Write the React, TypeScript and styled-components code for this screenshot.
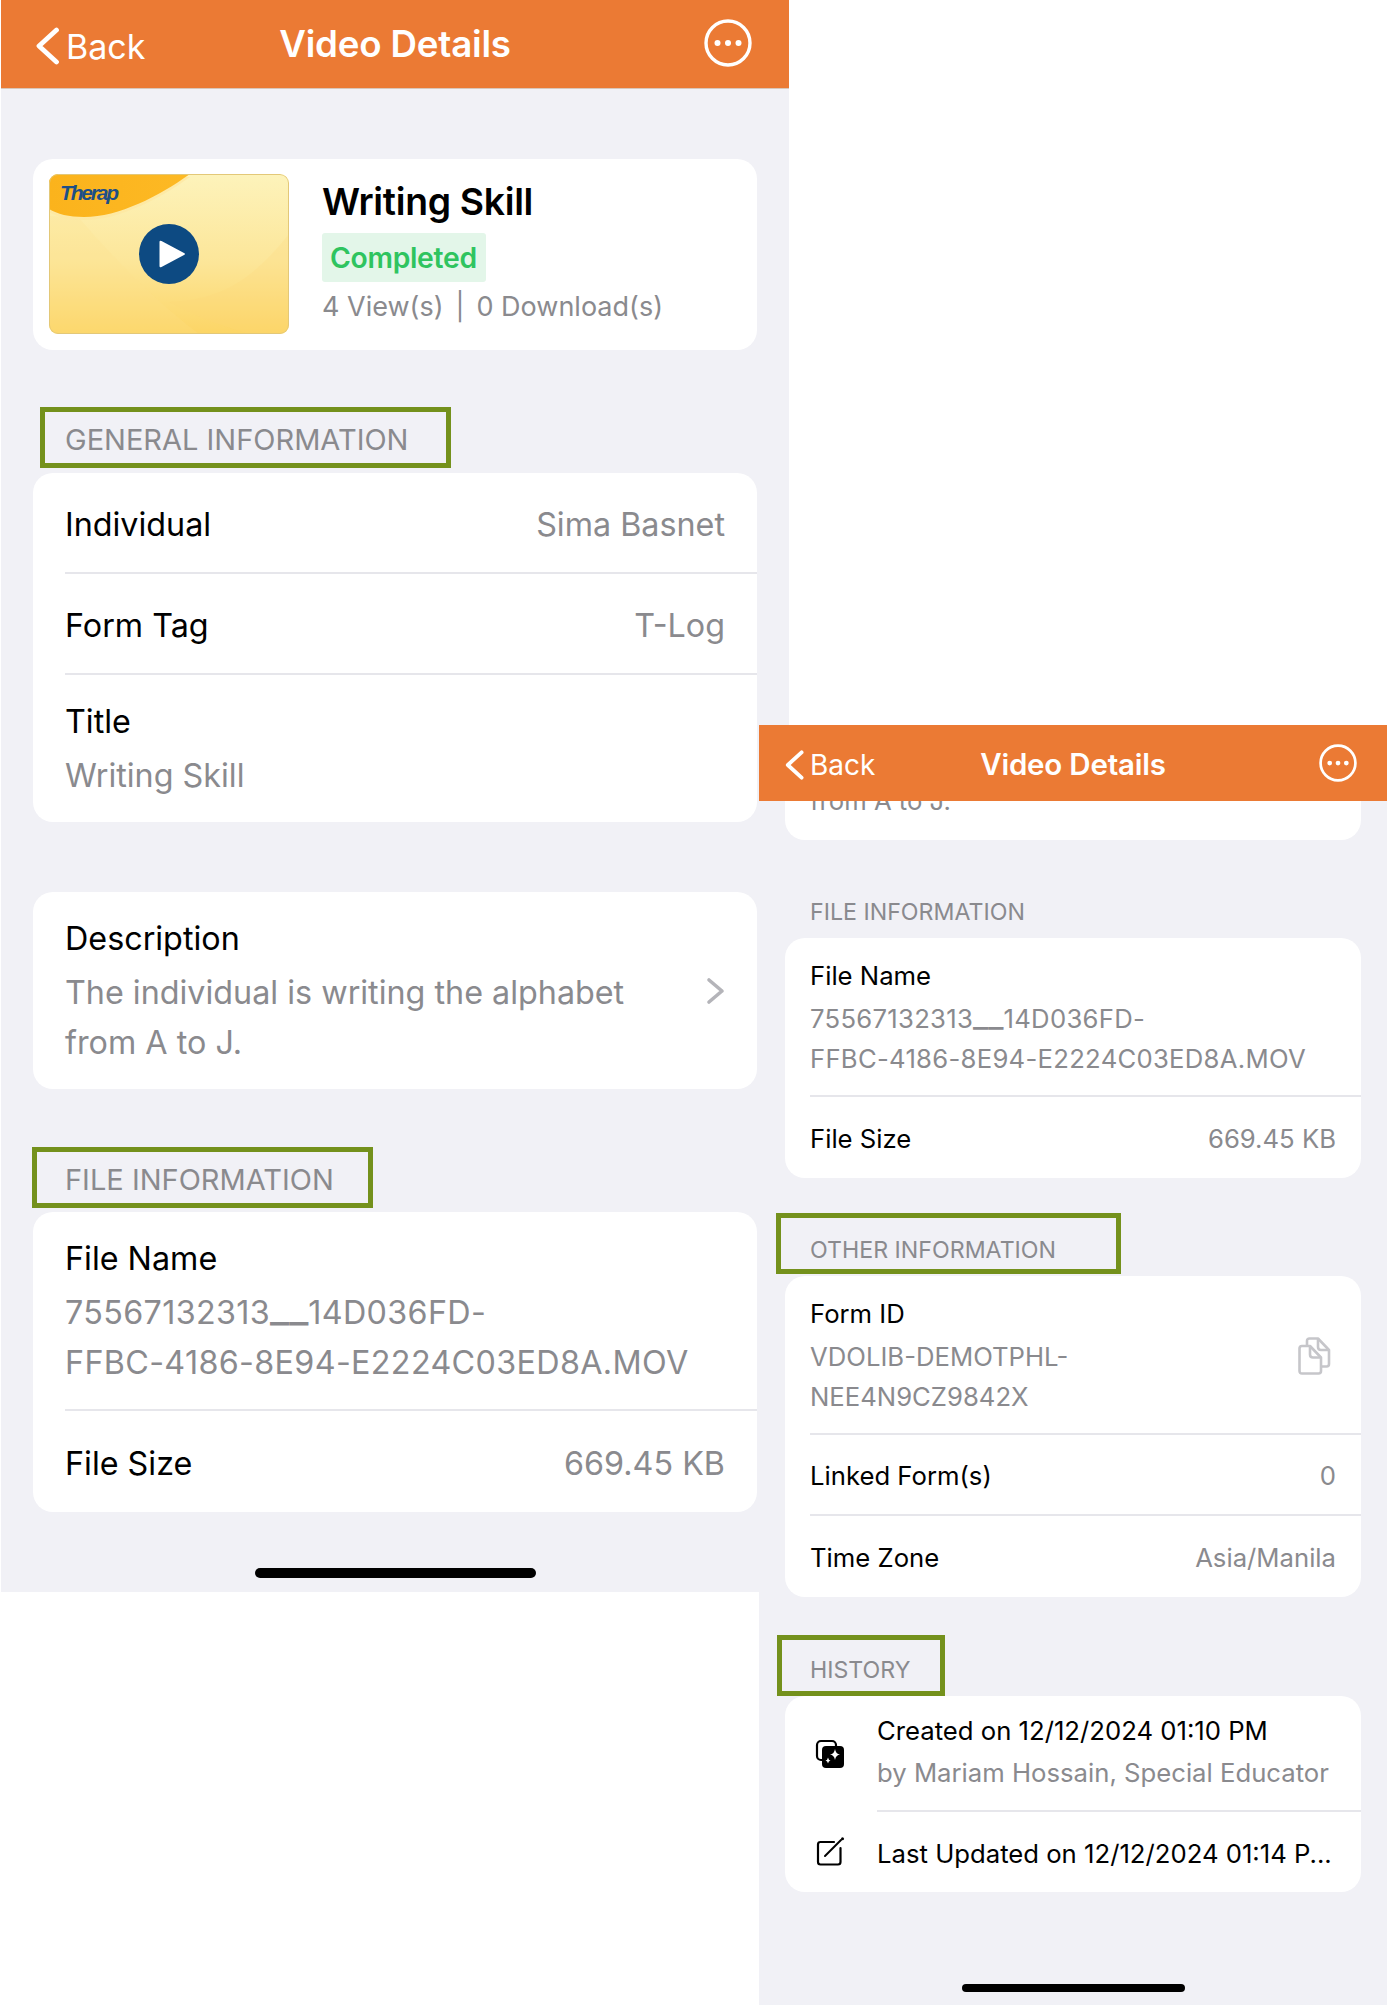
import React from 'react';
import styled, { createGlobalStyle } from 'styled-components';

const GlobalStyle = createGlobalStyle`
    html, body {
        margin: 0;
        padding: 0;
        background: #fff;
    }
    * {
        box-sizing: border-box;
    }
`

const Page = styled.div`
    width: 1387px;
    height: 2005px;
    padding-left: 1px;
    display: flex;
    align-items: flex-start;
    overflow: hidden;
    font-family: 'Inter', 'Liberation Sans', sans-serif;
    color: #000;
`

// the two screenshots differ in scale, so sizes hang off css variables
const Phone = styled.div<{ $small?: boolean }>`
    display: flex;
    flex-direction: column;
    flex: none;
    background: #f1f1f6;
    --text: ${p => (p.$small ? '25.7px' : '32.3px')};
    --line: ${p => (p.$small ? '40px' : '50px')};
    --label: ${p => (p.$small ? '23.2px' : '29px')};
    --row: ${p => (p.$small ? '81px' : '101px')};
    --row-top: ${p => (p.$small ? '2px' : '4px')};
    --pad-top: ${p => (p.$small ? '18px' : '22px')};
    --pad-bottom: ${p => (p.$small ? '16px' : '21px')};
    --inset: ${p => (p.$small ? '25px' : '32px')};
    --line-gap: ${p => (p.$small ? '3px' : '4px')};
    width: ${p => (p.$small ? '628px' : '788px')};
    height: ${p => (p.$small ? '1280px' : '1592px')};
    margin: ${p => (p.$small ? '725px 0 0 -30px' : '0')};
`

const Header = styled.header<{ $small?: boolean }>`
    display: grid;
    grid-template-columns: 1fr auto 1fr;
    align-items: center;
    flex: none;
    background: #eb7a34;
    color: #fff;
    height: ${p => (p.$small ? '76px' : '89px')};
    padding: ${p => (p.$small ? '0 30px' : '0 37px 2px')};
    border-bottom: ${p => (p.$small ? '0' : '1px solid #d9c6b9')};
    position: relative;
    z-index: 1;
`

const BackButton = styled.div<{ $small?: boolean }>`
    display: flex;
    align-items: center;
    gap: ${p => (p.$small ? '6px' : '7px')};
    margin-left: ${p => (p.$small ? '-4px' : '-2px')};
    font-size: ${p => (p.$small ? '28px' : '34px')};
    padding-top: ${p => (p.$small ? '4px' : '6px')};
`

const HeaderTitle = styled.div<{ $small?: boolean }>`
    font-size: ${p => (p.$small ? '29.5px' : '36.7px')};
    padding-top: ${p => (p.$small ? '1px' : '0')};
    font-weight: 600;
    letter-spacing: -0.2px;
`

const MoreWrap = styled.div`
    display: flex;
    justify-content: flex-end;
`

const Content = styled.div<{ $small?: boolean }>`
    display: flex;
    flex-direction: column;
    padding: ${p => (p.$small ? '0 26px' : '70px 32px 0')};
`

const Card = styled.section<{ $gap?: number }>`
    background: #fff;
    border-radius: 20px;
    overflow: hidden;
    margin-top: ${p => p.$gap ?? 0}px;
`

const ClippedCard = styled(Card)`
    height: 39px;
    border-radius: 0 0 20px 20px;
    padding-left: 25px;
`

const ClippedText = styled.div`
    margin-top: -20px;
    font-size: var(--text);
    line-height: var(--line);
    color: #8a8a8e;
`

const VideoCard = styled(Card)`
    display: flex;
    gap: 33px;
    padding: 15px 16px 16px;
`

const Thumb = styled.svg`
    display: block;
    flex: none;
    width: 240px;
    height: 160px;
    border-radius: 9px;
`

const VideoInfo = styled.div`
    display: flex;
    flex-direction: column;
    align-items: flex-start;
    padding-top: 5px;
`

const VideoTitle = styled.h1`
    margin: 0 0 8px;
    font-size: 37.3px;
    line-height: 46px;
    font-weight: 600;
    letter-spacing: -0.3px;
`

const Badge = styled.span`
    height: 49px;
    padding: 0 9.5px 0 8px;
    display: flex;
    align-items: center;
    background: #e3f6e9;
    border-radius: 3px;
    color: #2fc45f;
    font-size: 28.3px;
    font-weight: 600;
    letter-spacing: -0.3px;
`

const Stats = styled.div`
    margin-top: 3px;
    font-size: 27px;
    line-height: 44px;
    color: #8a8a8e;
    display: flex;
    gap: 12px;
`

// section title; $boxed draws the green call out that is on the screenshot
const SectionLabel = styled.div<{ $boxed?: boolean; $x: number; $w: number; $before: number; $after: number; $pad: number; $top?: number }>`
    flex: none;
    height: 61px;
    width: ${p => p.$w}px;
    margin: ${p => p.$before}px 0 ${p => p.$after}px ${p => p.$x}px;
    padding: ${p => (p.$top ?? 8) - 1}px 0 0 ${p => p.$pad - 1}px;
    border: 5px solid ${p => (p.$boxed ? '#74911c' : 'transparent')};
    font-size: var(--label);
    line-height: 42px;
    color: #8a8a8e;
    white-space: nowrap;
`

const Row = styled.div`
    display: flex;
    align-items: center;
    justify-content: space-between;
    min-height: var(--row);
    margin-left: var(--inset);
    padding: var(--row-top) var(--inset) 0 0;
    font-size: var(--text);
    line-height: var(--line);

    &:not(:last-child) {
        border-bottom: 2px solid #e6e6eb;
    }
`

const StackRow = styled(Row)`
    padding-top: var(--pad-top);
    padding-bottom: var(--pad-bottom);
`

const Stack = styled.div`
    display: flex;
    flex-direction: column;
    gap: var(--line-gap);
`

const Value = styled.span`
    color: #8a8a8e;
`

const WrapValue = styled(Value)`
    display: block;
    white-space: pre-line;
`

const FileValue = styled(WrapValue)`
    letter-spacing: 0.0103em;
`

// the reference draws these wider than Inter does, and joined up
const Underscores = styled.span`
    font-size: 1.3em;
    line-height: 0;
    letter-spacing: 0;
    vertical-align: 0.04em;
`

const CopyWrap = styled.div`
    display: flex;
    margin-right: 5px;
`

const HistoryRow = styled.div`
    display: grid;
    grid-template-columns: 92px 1fr;
    align-items: center;
    font-size: var(--text);
`

const HistoryIcon = styled.div`
    display: flex;
    justify-content: center;
    padding-right: 2px;
`

const HistoryBody = styled.div<{ $first?: boolean }>`
    display: flex;
    flex-direction: column;
    justify-content: center;
    gap: 2px;
    height: ${p => (p.$first ? '116px' : '80px')};
    line-height: 40px;
    white-space: nowrap;
    border-bottom: ${p => (p.$first ? '2px solid #e6e6eb' : '0')};
    padding: ${p => (p.$first ? '1px 0 3px' : '4px 0 0')};
`

const HomeBar = styled.div<{ $small?: boolean }>`
    flex: none;
    margin: auto auto ${p => (p.$small ? '13px' : '14px')};
    width: ${p => (p.$small ? '223px' : '281px')};
    height: ${p => (p.$small ? '8px' : '10px')};
    border-radius: 5px;
    background: #000;
`

function Chevron({ small }: { small?: boolean }) {
    const w = small ? 19 : 23
    const h = small ? 30 : 38
    return (
        <svg width={w} height={h} viewBox="0 0 23 38" fill="none">
            <path d="M20.500 3 L3 19 L20.500 35" stroke="#fff" strokeWidth="4.800" strokeLinecap="round" strokeLinejoin="round" />
        </svg>
    )
}

function MoreIcon({ small }: { small?: boolean }) {
    const size = small ? 38 : 48
    return (
        <svg width={size} height={size} viewBox="0 0 48 48" fill="none">
            <circle cx="24" cy="24" r="22" stroke="#fff" strokeWidth="3.400" />
            <circle cx="13.500" cy="24" r="3" fill="#fff" />
            <circle cx="24" cy="24" r="3" fill="#fff" />
            <circle cx="34.500" cy="24" r="3" fill="#fff" />
        </svg>
    )
}

function DisclosureIcon() {
    return (
        <svg width="19" height="28" viewBox="0 0 19 28" fill="none">
            <path d="M3 3 L16 14 L3 25" stroke="#b4b4b9" strokeWidth="3.600" strokeLinecap="round" strokeLinejoin="round" />
        </svg>
    )
}

function CopyIcon() {
    return (
        <svg width="33" height="38" viewBox="0 0 33 38" fill="none" stroke="#c6c6ca" strokeWidth="2.600" strokeLinejoin="round">
            <path d="M9 9 V4 Q9 1.500 11.500 1.500 H20 L31 13 V27 Q31 29.500 28.500 29.500 H23" />
            <path d="M20 1.500 V10 Q20 13 23 13 H31" />
            <path d="M4 9 H12 L23 20.500 V34 Q23 36.500 20.500 36.500 H4 Q1.500 36.500 1.500 34 V11.500 Q1.500 9 4 9 Z" fill="#fff" />
            <path d="M12 9 V17.500 Q12 20.500 15 20.500 H23" />
        </svg>
    )
}

function CreatedIcon() {
    return (
        <svg width="30" height="30" viewBox="0 0 30 30" fill="none">
            <rect x="2" y="2" width="19" height="19" rx="4" stroke="#000" strokeWidth="2.200" />
            <rect x="7" y="7" width="22" height="22" rx="4" fill="#000" />
            <path d="M20 10 Q20.800 15 25 15.500 Q20.800 16 20 21 Q19.200 16 15 15.500 Q19.200 15 20 10 Z" fill="#fff" />
            <path d="M13 18.500 Q13.400 21 15.500 21.500 Q13.400 22 13 24.500 Q12.600 22 10.500 21.500 Q12.600 21 13 18.500 Z" fill="#fff" />
        </svg>
    )
}

function EditIcon() {
    return (
        <svg width="30" height="30" viewBox="0 0 30 30" fill="none">
            <path d="M19 5 H5.500 Q3 5 3 7.500 V25 Q3 27.500 5.500 27.500 H23 Q25.500 27.500 25.500 25 V11" stroke="#000" strokeWidth="2.200" strokeLinecap="round" />
            <path d="M10 19 L26 3" stroke="#000" strokeWidth="2" strokeLinecap="round" />
            <circle cx="27.500" cy="1.800" r="1.500" fill="#000" />
        </svg>
    )
}

function Thumbnail() {
    return (
        <Thumb viewBox="0 0 240 160">
            <defs>
                <linearGradient id="paper" x1="0" y1="0" x2="0" y2="1">
                    <stop offset="0" stopColor="#fdf3bb" />
                    <stop offset="0.55" stopColor="#fce699" />
                    <stop offset="1" stopColor="#fcd565" />
                </linearGradient>
                <linearGradient id="swoosh" x1="0" y1="0" x2="1" y2="0">
                    <stop offset="0" stopColor="#fbb31c" />
                    <stop offset="1" stopColor="#fdb924" />
                </linearGradient>
            </defs>
            <rect width="240" height="160" fill="url(#paper)" />
            <path d="M30 44 C70 90 110 130 150 160 H0 V42 Z" fill="#fde08a" opacity="0.2" />
            <path d="M240 60 C200 110 170 125 120 128 C150 145 175 152 200 160 H240 Z" fill="#fdd977" opacity="0.2" />
            <path d="M0 0 H141 C110 22 70 43 35 43 C20 43 8 40 0 35 Z" fill="#fde7a0" opacity="0.7" transform="translate(0 3)" />
            <path d="M0 0 H141 C110 22 70 43 35 43 C20 43 8 40 0 35 Z" fill="url(#swoosh)" />
            <text x="11" y="26" fontFamily="'Liberation Sans', sans-serif" fontStyle="italic" fontWeight="700" fontSize="21" letterSpacing="-2.200" fill="#1d4f86">Therap</text>
            <circle cx="120" cy="80" r="30" fill="#0d4a82" />
            <path d="M112.500 67 L135 79 Q137 80 135 81 L112.500 93 Q110.500 94 110.500 92 V68 Q110.500 66 112.500 67 Z" fill="#fff" />
            <rect x="0.500" y="0.500" width="239" height="159" rx="8.500" fill="none" stroke="#e3c878" />
        </Thumb>
    )
}

function FileName() {
    return (
        <FileValue>
            75567132313<Underscores>__</Underscores>14D036FD-{'\n'}FFBC-4186-8E94-E2224C03ED8A.MOV
        </FileValue>
    )
}

export default function App() {
    return (
        <Page>
            <GlobalStyle />
            <Phone>
                <Header>
                    <BackButton><Chevron /> Back</BackButton>
                    <HeaderTitle>Video Details</HeaderTitle>
                    <MoreWrap><MoreIcon /></MoreWrap>
                </Header>
                <Content>
                    <VideoCard>
                        <Thumbnail />
                        <VideoInfo>
                            <VideoTitle>Writing Skill</VideoTitle>
                            <Badge>Completed</Badge>
                            <Stats>
                                <span>4 View(s)</span>
                                <span>|</span>
                                <span>0 Download(s)</span>
                            </Stats>
                        </VideoInfo>
                    </VideoCard>

                    <SectionLabel $boxed $x={7} $w={411} $before={57} $after={5} $pad={21}>GENERAL INFORMATION</SectionLabel>
                    <Card>
                        <Row>Individual <Value>Sima Basnet</Value></Row>
                        <Row>Form Tag <Value>T-Log</Value></Row>
                        <StackRow>
                            <Stack>
                                <span>Title</span>
                                <Value>Writing Skill</Value>
                            </Stack>
                        </StackRow>
                    </Card>

                    <Card $gap={70}>
                        <StackRow>
                            <Stack>
                                <span>Description</span>
                                <WrapValue>{'The individual is writing the alphabet\nfrom A to J.'}</WrapValue>
                            </Stack>
                            <DisclosureIcon />
                        </StackRow>
                    </Card>

                    <SectionLabel $boxed $x={-1} $w={341} $before={58} $after={4} $pad={29}>FILE INFORMATION</SectionLabel>
                    <Card>
                        <StackRow>
                            <Stack>
                                <span>File Name</span>
                                <FileName />
                            </Stack>
                        </StackRow>
                        <Row>File Size <Value>669.45 KB</Value></Row>
                    </Card>
                </Content>
                <HomeBar />
            </Phone>

            <Phone $small>
                <Header $small>
                    <BackButton $small><Chevron small /> Back</BackButton>
                    <HeaderTitle $small>Video Details</HeaderTitle>
                    <MoreWrap><MoreIcon small /></MoreWrap>
                </Header>
                <Content $small>
                    <ClippedCard>
                        <ClippedText>from A to J.</ClippedText>
                    </ClippedCard>

                    <SectionLabel $x={0} $w={400} $before={38} $after={-1} $pad={21} $top={9}>FILE INFORMATION</SectionLabel>
                    <Card>
                        <StackRow>
                            <Stack>
                                <span>File Name</span>
                                <FileName />
                            </Stack>
                        </StackRow>
                        <Row>File Size <Value>669.45 KB</Value></Row>
                    </Card>

                    <SectionLabel $boxed $x={-9} $w={345} $before={35} $after={2} $pad={30} $top={12}>OTHER INFORMATION</SectionLabel>
                    <Card>
                        <StackRow>
                            <Stack>
                                <span>Form ID</span>
                                <WrapValue>{'VDOLIB-DEMOTPHL-\nNEE4N9CZ9842X'}</WrapValue>
                            </Stack>
                            <CopyWrap><CopyIcon /></CopyWrap>
                        </StackRow>
                        <Row>Linked Form(s) <Value>0</Value></Row>
                        <Row>Time Zone <Value>Asia/Manila</Value></Row>
                    </Card>

                    <SectionLabel $boxed $x={-8} $w={168} $before={38} $after={0} $pad={29} $top={10}>HISTORY</SectionLabel>
                    <Card>
                        <HistoryRow>
                            <HistoryIcon><CreatedIcon /></HistoryIcon>
                            <HistoryBody $first>
                                <span>Created on 12/12/2024 01:10 PM</span>
                                <Value>by Mariam Hossain, Special Educator</Value>
                            </HistoryBody>
                        </HistoryRow>
                        <HistoryRow>
                            <HistoryIcon><EditIcon /></HistoryIcon>
                            <HistoryBody>Last Updated on 12/12/2024 01:14 P...</HistoryBody>
                        </HistoryRow>
                    </Card>
                </Content>
                <HomeBar $small />
            </Phone>
        </Page>
    )
}
